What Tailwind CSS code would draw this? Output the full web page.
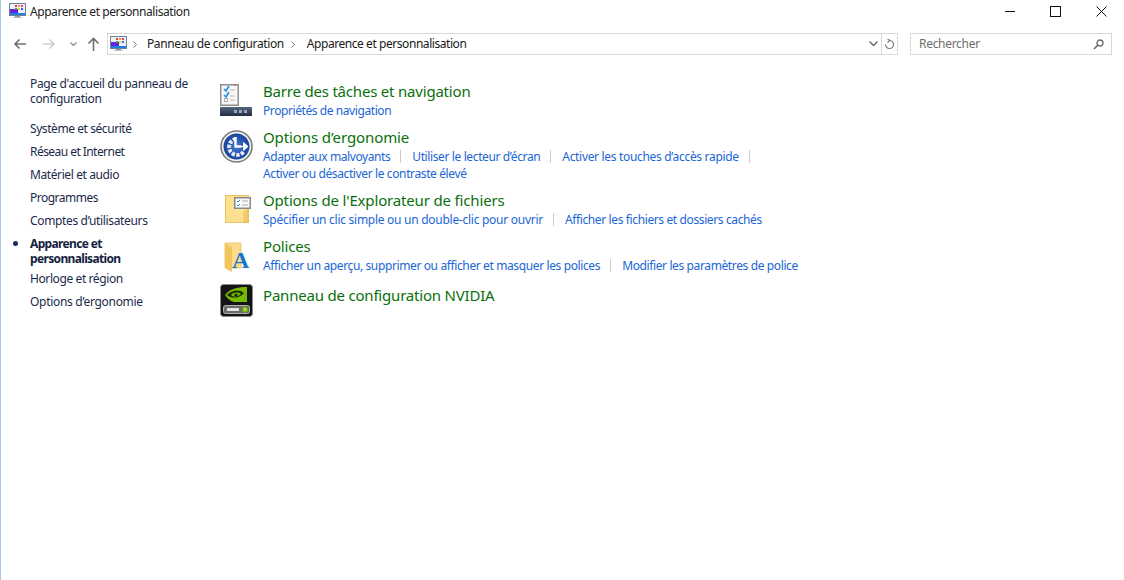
<!DOCTYPE html>
<html lang="fr">
<head>
  <meta charset="UTF-8">
  <title>Apparence et personnalisation</title>
  <script src="https://cdn.jsdelivr.net/npm/@tailwindcss/browser@4"></script>
</head>
<body class="bg-white h-[580px] w-[1124px] overflow-hidden font-['Noto_Sans',sans-serif] text-[12px] text-[#1a1a1a]">
  <div class="h-[580px] border-l border-[#a9c9e6] flex flex-col">

    <!-- title bar -->
    <div class="h-[24px] flex items-center">
      <svg class="ml-[8px] mt-[-2px] w-[17px] h-[16px]" viewBox="0 0 17 16">
        <rect x="0.5" y="0.5" width="16" height="12" fill="#eef2f8" stroke="#6d7f99"/>
        <rect x="1" y="6" width="8" height="6" fill="#6a22d8"/>
        <rect x="1" y="10" width="15" height="2" fill="#1c7fe0"/>
        <rect x="6" y="2" width="2" height="2" fill="#e23b3b"/><rect x="9" y="2" width="2" height="2" fill="#f0a020"/><rect x="12" y="2" width="2" height="2" fill="#e23b9b"/>
        <rect x="6" y="5" width="2" height="2" fill="#2aa84a"/><rect x="9" y="5" width="2" height="2" fill="#f2d020"/><rect x="12" y="5" width="2" height="2" fill="#2070e0"/>
        <rect x="6" y="13" width="5" height="1" fill="#8a97aa"/><rect x="4" y="14" width="9" height="1" fill="#b5bdca"/>
      </svg>
      <span class="ml-[4px] text-[#222] tracking-[-0.44px]">Apparence et personnalisation</span>
      <div class="ml-auto flex items-center mt-[-2px]">
        <svg class="w-[11px] h-[11px] mr-[34px]" viewBox="0 0 11 11"><path d="M0 5.5h10" stroke="#111" fill="none"/></svg>
        <svg class="w-[11px] h-[11px] mr-[35px]" viewBox="0 0 11 11"><rect x="0.5" y="0.5" width="10" height="10" stroke="#111" fill="none"/></svg>
        <svg class="w-[11px] h-[11px] mr-[17px]" viewBox="0 0 11 11"><path d="M0.5 0.5l10 10M10.5 0.5l-10 10" stroke="#111" fill="none"/></svg>
      </div>
    </div>

    <!-- address bar -->
    <div class="h-[22px] mt-[9px] flex items-center">
      <svg class="ml-[12px] w-[14px] h-[12px]" viewBox="0 0 14 12"><path d="M13 6H2M6.5 1.5L2 6l4.5 4.5" stroke="#6e6e6e" stroke-width="1.6" fill="none"/></svg>
      <svg class="ml-[15px] w-[14px] h-[12px]" viewBox="0 0 14 12"><path d="M1 6h11M7.5 1.5L12 6l-4.5 4.5" stroke="#cfcfcf" stroke-width="1.6" fill="none"/></svg>
      <svg class="ml-[14px] w-[7px] h-[5px]" viewBox="0 0 7 5"><path d="M0.5 0.5L3.5 3.5L6.5 0.5" stroke="#8a8a8a" stroke-width="1.2" fill="none"/></svg>
      <svg class="ml-[10px] w-[13px] h-[14px]" viewBox="0 0 13 14"><path d="M6.5 14V2M1.5 6.5L6.5 1.5l5 5" stroke="#6e6e6e" stroke-width="1.6" fill="none"/></svg>
      <div class="ml-[7px] w-[791px] h-[22px] border border-[#d9d9d9] flex items-center">
        <svg class="ml-[2px] w-[17px] h-[16px]" viewBox="0 0 17 16">
          <rect x="0.5" y="0.5" width="16" height="12" fill="#eef2f8" stroke="#6d7f99"/>
          <rect x="1" y="6" width="8" height="6" fill="#6a22d8"/>
          <rect x="1" y="10" width="15" height="2" fill="#1c7fe0"/>
          <rect x="6" y="2" width="2" height="2" fill="#e23b3b"/><rect x="9" y="2" width="2" height="2" fill="#f0a020"/><rect x="12" y="2" width="2" height="2" fill="#e23b9b"/>
          <rect x="6" y="5" width="2" height="2" fill="#2aa84a"/><rect x="9" y="5" width="2" height="2" fill="#f2d020"/><rect x="12" y="5" width="2" height="2" fill="#2070e0"/>
          <rect x="6" y="13" width="5" height="1" fill="#8a97aa"/><rect x="4" y="14" width="9" height="1" fill="#b5bdca"/>
        </svg>
        <svg class="ml-[6px] w-[4px] h-[7px]" viewBox="0 0 4 7"><path d="M0.5 0.5l3 3-3 3" stroke="#777" fill="none"/></svg>
        <span class="ml-[10px] tracking-[-0.39px]">Panneau de configuration</span>
        <svg class="ml-[7px] w-[4px] h-[7px]" viewBox="0 0 4 7"><path d="M0.5 0.5l3 3-3 3" stroke="#777" fill="none"/></svg>
        <span class="ml-[12px] tracking-[-0.44px]">Apparence et personnalisation</span>
        <svg class="ml-auto mr-[3px] w-[9px] h-[6px]" viewBox="0 0 9 6"><path d="M0.5 0.5L4.5 4.5L8.5 0.5" stroke="#666" stroke-width="1.4" fill="none"/></svg>
        <div class="w-[16px] h-[20px] border-l border-[#d9d9d9] flex items-center justify-center">
          <svg class="w-[11px] h-[11px]" viewBox="0 0 11 11"><path d="M5.5 1.5a4 4 0 1 1-4 4M3.5 0l2.5 1.5L3.5 3.5" stroke="#777" stroke-width="1.2" fill="none"/></svg>
        </div>
      </div>
      <div class="ml-[12px] w-[202px] h-[22px] border border-[#d9d9d9] flex items-center">
        <span class="ml-[8px] text-[#6d6d6d] tracking-[-0.3px]">Rechercher</span>
        <svg class="ml-auto mr-[7px] w-[11px] h-[11px]" viewBox="0 0 11 11"><circle cx="7" cy="4" r="3" stroke="#666" stroke-width="1.3" fill="none"/><path d="M4.8 6.2L1 10" stroke="#666" stroke-width="1.6" fill="none"/></svg>
      </div>
    </div>

    <div class="flex mt-[21px]">
      <!-- left nav -->
      <nav class="w-[219px] shrink-0 pl-[29px] text-[#1c2a4a] leading-[15px] tracking-[-0.35px]">
        <div class="w-[170px]">Page d'accueil du panneau de configuration</div>
        <div class="mt-[15px] tracking-[-0.43px]">Système et sécurité</div>
        <div class="mt-[8px] tracking-[-0.55px]">Réseau et Internet</div>
        <div class="mt-[8px] tracking-[-0.4px]">Matériel et audio</div>
        <div class="mt-[8px] tracking-[-0.5px]">Programmes</div>
        <div class="mt-[8px]">Comptes d’utilisateurs</div>
        <div class="relative mt-[8px] w-[120px] font-bold text-[#14213d] tracking-[-0.65px]">
          <span class="absolute left-[-17px] top-[5px] w-[5px] h-[5px] rounded-full bg-[#1c2a5a]"></span>
          Apparence et personnalisation
        </div>
        <div class="mt-[5px] tracking-[-0.4px]">Horloge et région</div>
        <div class="mt-[8px] tracking-[-0.3px]">Options d’ergonomie</div>
      </nav>

      <!-- categories -->
      <main class="flex-1 tracking-[-0.38px] text-[#1a66d6] pt-[5px]">
        <section class="flex h-[47px]">
          <svg class="w-[32px] h-[32px] mt-[3px] shrink-0" viewBox="0 0 32 32">
            <defs><linearGradient id="bar" x1="0" y1="0" x2="0" y2="1"><stop offset="0" stop-color="#56677f"/><stop offset="1" stop-color="#1f2c44"/></linearGradient></defs>
            <rect x="0.75" y="0.75" width="17.5" height="20.5" fill="#f6f6f6" stroke="#8f8f8f" stroke-width="1.5"/>
            <rect x="14" y="1" width="2" height="1" fill="#e0605a"/>
            <path d="M4 5l2 2 3-5M4 11l2 2 3-5" stroke="#1f8fe0" stroke-width="1.6" fill="none"/>
            <rect x="4.5" y="14.5" width="3" height="3" fill="#fff" stroke="#aaa"/>
            <path d="M10 6h5M10 12h5M10 16h5" stroke="#bbb"/>
            <rect y="23" width="32" height="9" fill="url(#bar)"/>
            <rect x="14" y="26" width="3" height="3" fill="#9aa5b5"/><rect x="19" y="26" width="3" height="3" fill="#9aa5b5"/><rect x="24" y="26" width="3" height="3" fill="#9aa5b5"/>
          </svg>
          <div class="ml-[11px]">
            <h2 class="text-[15px] leading-[20px] text-[#0a700a] font-normal tracking-[-0.2px]">Barre des tâches et navigation</h2>
            <div class="leading-[17px] mt-[1px] tracking-[-0.42px]">Propriétés de navigation</div>
          </div>
        </section>
        <section class="flex h-[63px]">
          <svg class="w-[33px] h-[33px] mt-[2px] shrink-0" viewBox="0 0 33 33">
            <defs><radialGradient id="ball" cx="0.5" cy="0.5" r="0.6"><stop offset="0" stop-color="#3f78d8"/><stop offset="1" stop-color="#123a8c"/></radialGradient></defs>
            <circle cx="16.5" cy="16.5" r="15.5" fill="#f1f1f1" stroke="#7a7a7a" stroke-width="1.6"/>
            <circle cx="16.5" cy="16.5" r="13" fill="url(#ball)"/>
            <path d="M16 9a8 8 0 1 0 8 12" fill="none" stroke="#e6ebf4" stroke-width="4" stroke-dasharray="3.2 1.4"/>
            <path d="M15.5 7v9.5h6" stroke="#fff" stroke-width="2.4" fill="none"/>
            <path d="M20 16.5h4M23.5 12.5l4.5 4-4.5 4z" fill="#fff" stroke="#fff"/>
          </svg>
          <div class="ml-[10px]">
            <h2 class="-mt-px mb-px text-[15px] leading-[20px] text-[#0a700a] font-normal tracking-[-0.1px]">Options d’ergonomie</h2>
            <div class="leading-[17px] flex">
              <span class="tracking-[-0.42px]">Adapter aux malvoyants</span><span class="ml-[10px] mr-[11px] w-px h-[13px] mt-[2px] bg-[#ccc]"></span>
              <span>Utiliser le lecteur d’écran</span><span class="ml-[10px] mr-[11px] w-px h-[13px] mt-[2px] bg-[#ccc]"></span>
              <span class="tracking-[-0.32px]">Activer les touches d’accès rapide</span><span class="ml-[10px] w-px h-[13px] mt-[2px] bg-[#ccc]"></span>
            </div>
            <div class="leading-[17px]">Activer ou désactiver le contraste élevé</div>
          </div>
        </section>
        <section class="flex h-[46px]">
          <svg class="w-[32px] h-[32px] mt-[4px] shrink-0" viewBox="0 0 32 32">
            <rect x="5.5" y="0.5" width="23" height="27" fill="#fbe08f" stroke="#e6c264"/>
            <path d="M24 27V17l4-3v13z" fill="#f4cc69" stroke="#e6c264"/>
            <rect x="14.75" y="2.75" width="15.5" height="10.5" fill="#fafafa" stroke="#8a8a8a" stroke-width="1.5"/>
            <path d="M17 6l1 1 2-2M17 10l1 1 2-2" stroke="#2a8fe0" fill="none"/>
            <path d="M22 6h6M22 10h6" stroke="#aaa"/>
          </svg>
          <div class="ml-[11px]">
            <h2 class="-mt-px mb-px text-[15px] leading-[20px] text-[#0a700a] font-normal tracking-[-0.16px]">Options de l'Explorateur de fichiers</h2>
            <div class="leading-[17px] flex">
              <span class="tracking-[-0.27px]">Spécifier un clic simple ou un double-clic pour ouvrir</span><span class="ml-[10px] mr-[11px] w-px h-[13px] mt-[2px] bg-[#ccc]"></span>
              <span>Afficher les fichiers et dossiers cachés</span>
            </div>
          </div>
        </section>
        <section class="flex h-[47px]">
          <div class="relative w-[32px] h-[32px] mt-[5px] shrink-0">
            <svg class="w-[32px] h-[32px]" viewBox="0 0 32 32">
              <path d="M5 1h16v25H5z" fill="#fbdc8c" stroke="#eccb78"/>
              <path d="M5 1l7 4v25l-7-4z" fill="#f2c65c"/>
            </svg>
            <span class="absolute left-[12px] top-[6px] font-['Liberation_Serif',serif] font-bold text-[24px] leading-[24px] tracking-normal text-[#1878c8]">A</span>
          </div>
          <div class="ml-[11px]">
            <h2 class="-mt-px mb-px text-[15px] leading-[20px] text-[#0a700a] font-normal tracking-[-0.16px]">Polices</h2>
            <div class="leading-[17px] flex">
              <span>Afficher un aperçu, supprimer ou afficher et masquer les polices</span><span class="ml-[10px] mr-[11px] w-px h-[13px] mt-[2px] bg-[#ccc]"></span>
              <span>Modifier les paramètres de police</span>
            </div>
          </div>
        </section>
        <section class="flex h-[40px]">
          <svg class="w-[33px] h-[33px] shrink-0" viewBox="0 0 33 33">
            <rect x="0.5" y="0.5" width="32" height="32" rx="3" fill="#141414" stroke="#8a8a8a"/>
            <path d="M5 11C10 4 19 3 27 3v15H14C10 17 7 14 5 11z" fill="#76b900"/>
            <path d="M7 11c5-5 12-6 17-2-3 4-11 7-17 2z" fill="#1a2a00"/>
            <path d="M11 11c3-3 7-3 10-1-2 2-7 4-10 1z" fill="#76b900"/>
            <circle cx="16" cy="11" r="1.6" fill="#1a2a00"/>
            <rect x="3.5" y="21.5" width="26" height="8" rx="2" fill="#6a6a6a" stroke="#b0b0b0"/>
            <rect x="7" y="24" width="12" height="3" fill="#e4e4e4"/>
            <circle cx="25" cy="25.5" r="3" fill="#76b900"/>
            <circle cx="25" cy="25.5" r="1" fill="#eaf5c8"/>
          </svg>
          <div class="ml-[10px]">
            <h2 class="text-[15px] leading-[20px] text-[#0a700a] font-normal tracking-[-0.2px] mt-[1px]">Panneau de configuration NVIDIA</h2>
          </div>
        </section>
      </main>
    </div>
  </div>
</body>
</html>
